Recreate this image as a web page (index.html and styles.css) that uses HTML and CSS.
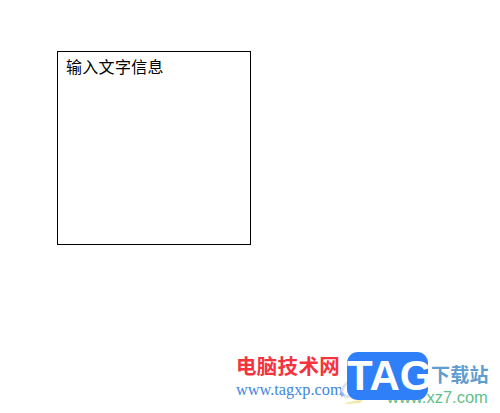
FILE: index.html
```html
<!DOCTYPE html>
<html lang="zh">
<head>
<meta charset="utf-8">
<title>输入文字信息</title>
<link rel="stylesheet" href="styles.css">
</head>
<body>
<main class="canvas">
  <div class="textbox">输入文字信息</div>
</main>
<aside class="watermark">
  <div class="site">
    <div class="site-name">电脑技术网</div>
    <div class="site-url">www.tagxp.com</div>
  </div>
  <svg class="swoosh" width="40" height="30" viewBox="0 0 40 30" aria-hidden="true">
    <path d="M12 2 C4 6 0 12 3 17 C6 20 12 18 18 14" fill="none" stroke="#dbe6ee" stroke-width="3"/>
    <path d="M1 13 L5 17 L1 19 Z" fill="#8fb8e8"/>
    <path d="M4 25 L24 21 L20 25 L8 26 Z" fill="#f3e9a8"/>
  </svg>
  <div class="brand-url">www.xz7.com</div>
  <div class="tag">TAG</div>
  <div class="brand-name">下载站</div>
</aside>
</body>
</html>
```
FILE: styles.css
```css
html, body {
  margin: 0;
  padding: 0;
  width: 500px;
  height: 413px;
  background: #ffffff;
  overflow: hidden;
}
body {
  position: relative;
}
.canvas {
  padding: 51px 0 0 57px;
}
.textbox {
  box-sizing: border-box;
  width: 194px;
  height: 194px;
  border: 1px solid #000000;
  padding: 4px 8px;
  font: 400 16px/20px "Noto Sans CJK SC", sans-serif;
  letter-spacing: 0.3px;
  color: #000000;
}
.watermark {
  position: absolute;
  left: 236px;
  top: 352px;
  width: 264px;
  height: 61px;
}
.site {
  position: absolute;
  left: 0;
  top: 0;
}
.site-name {
  font: bold 20.5px/26px "Noto Sans CJK SC", sans-serif;
  letter-spacing: 0.3px;
  color: #f5333f;
  white-space: nowrap;
}
.site-url {
  margin-top: 3px;
  font: 16.3px/18px "Liberation Serif", serif;
  color: #3f86e0;
  white-space: nowrap;
}
.swoosh {
  position: absolute;
  left: 104px;
  top: 26px;
}
.tag {
  position: absolute;
  left: 111px;
  top: 0;
  width: 81px;
  height: 48px;
  border-radius: 11px;
  background: #2f7ff8;
  color: #ffffff;
  font: bold 42px/48px "Liberation Sans", sans-serif;
  text-align: center;
}
.brand-name {
  position: absolute;
  left: 195px;
  top: 10px;
  font: bold 19px/24px "Noto Sans CJK SC", sans-serif;
  letter-spacing: 0.3px;
  color: #5f9ccf;
  white-space: nowrap;
}
.brand-url {
  position: absolute;
  left: 151px;
  top: 36px;
  font: 16.5px/18px "Liberation Sans", sans-serif;
  color: #62c08a;
  white-space: nowrap;
}
```
